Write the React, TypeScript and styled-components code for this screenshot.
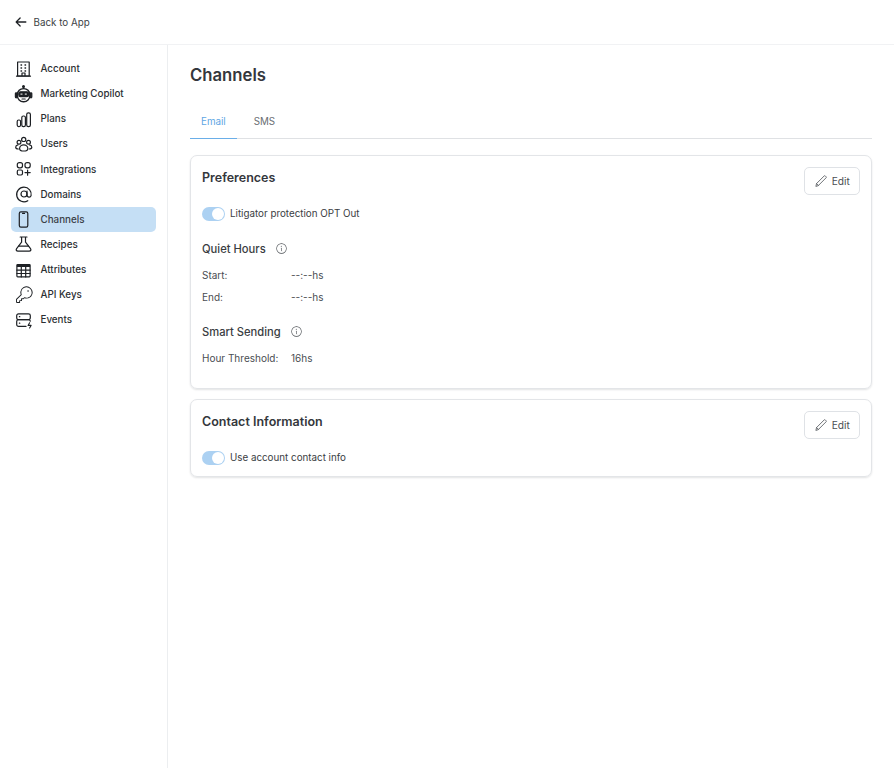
import React from 'react';
import styled, { createGlobalStyle } from 'styled-components';
import { PiArrowLeftBold, PiKeyLight, PiInfoLight } from 'react-icons/pi';

const GlobalStyle = createGlobalStyle`
  html, body {
    margin: 0;
    padding: 0;
    background: #fff;
    font-family: Inter, "Liberation Sans", sans-serif;
    color: #2f3237;
  }
  * { box-sizing: border-box; }
`;

const Page = styled.div`
  width: 894px;
  height: 768px;
  display: flex;
  flex-direction: column;
  overflow: hidden;
`;

const TopBar = styled.header`
  height: 45px;
  flex: none;
  display: flex;
  align-items: center;
  gap: 5.5px;
  padding: 0 0 0 14px;
  border-bottom: 1px solid #f1f2f4;
  font-size: 9.8px;
  color: #3c3f44;
  svg { font-size: 14px; color: #1f2226; }
`;

const Body = styled.div`
  flex: 1;
  display: flex;
  min-height: 0;
`;

const Sidebar = styled.nav`
  width: 168px;
  flex: none;
  border-right: 1px solid #eceef0;
  padding: 11px 11px 0;
  display: flex;
  flex-direction: column;
  gap: 0.15px;
`;

const NavItem = styled.div<{ $active?: boolean }>`
  width: 145px;
  height: 25px;
  display: flex;
  align-items: center;
  gap: 6.5px;
  padding-left: 3px;
  border-radius: 5px;
  font-size: 9.8px;
  font-weight: 500;
  color: ${p => (p.$active ? '#3a4046' : '#2c2f33')};
  background: ${p => (p.$active ? '#c5dff5' : 'transparent')};
  svg { width: 20px; height: 20px; flex: none; color: #1d2024; }
`;

const Main = styled.main`
  flex: 1;
  padding: 19px 22px 0;
  min-width: 0;
`;

const Title = styled.h1`
  margin: 0;
  font-size: 16.7px;
  line-height: 22px;
  font-weight: 600;
  color: #34373c;
`;

const Tabs = styled.div`
  margin-top: 18px;
  height: 35px;
  display: flex;
  border-bottom: 1px solid #dfe1e4;
`;

const Tab = styled.div<{ $active?: boolean }>`
  height: 35px;
  padding: 0 11px;
  margin-right: 6px;
  display: flex;
  align-items: center;
  font-size: 9.8px;
  color: ${p => (p.$active ? '#5ea6e4' : '#6a6e73')};
  border-bottom: ${p => (p.$active ? '1.5px solid #6aaee8' : 'none')};
`;

const Card = styled.section`
  margin-top: 10.5px;
  padding: 11px;
  border: 1px solid #e3e5e8;
  border-radius: 7px;
  box-shadow: 0 1px 2px rgba(20, 24, 30, 0.12);
  &:first-of-type { margin-top: 16px; }
`;

const CardHeader = styled.div`
  display: flex;
  justify-content: space-between;
  align-items: flex-start;
  height: 28px;
`;

const CardTitle = styled.h2`
  margin: 1px 0 0;
  font-size: 12.5px;
  line-height: 20px;
  font-weight: 600;
  color: #34373c;
`;

const EditButton = styled.button`
  width: 56.5px;
  height: 28px;
  display: flex;
  align-items: center;
  justify-content: center;
  gap: 4px;
  background: #fff;
  border: 1px solid #dfe2e6;
  border-radius: 5px;
  font-family: inherit;
  font-size: 10.2px;
  color: #4a4e53;
  padding: 0;
  svg { width: 14px; height: 14px; color: #55595e; }
`;

const ToggleRow = styled.div`
  margin-top: 11.5px;
  display: flex;
  align-items: center;
  gap: 5.5px;
  height: 14px;
  font-size: 9.8px;
  color: #3a3d42;
`;

const Toggle = styled.span`
  position: relative;
  width: 22.5px;
  height: 14px;
  border-radius: 7px;
  background: #acd1f2;
  &::after {
    content: '';
    position: absolute;
    right: 1px;
    top: 1px;
    width: 12px;
    height: 12px;
    border-radius: 50%;
    background: #fff;
  }
`;

const SectionTitle = styled.h3`
  margin: 19px 0 0;
  height: 18px;
  display: flex;
  align-items: center;
  gap: 9px;
  font-size: 11.2px;
  font-weight: 500;
  color: #3a3d42;
  svg { font-size: 13px; color: #4a4e53; }
`;

const Detail = styled.div`
  margin-top: 10px;
  display: grid;
  grid-template-columns: 89px 1fr;
  row-gap: 8px;
  font-size: 10px;
  line-height: 14px;
  color: #4a4d52;
`;

const Spacer = styled.div`
  height: 12px;
`;

const Stroke = styled.svg.attrs({
  viewBox: '0 0 20 20',
  fill: 'none',
  stroke: 'currentColor',
  strokeLinecap: 'round',
  strokeLinejoin: 'round',
  strokeWidth: 1.2,
})``;

const AccountIcon = () => (
  <Stroke>
    <rect x="3.6" y="3" width="11.6" height="14" />
    <path d="M2.5 17.2h14M8 17v-3h3v3" />
    <path d="M7 6h.6M11 6h.6M7 9h.6M11 9h.6M7 12h.6M11 12h.6" strokeWidth="1.3" />
  </Stroke>
);

const RobotIcon = () => (
  <Stroke>
    <circle cx="9.5" cy="2.6" r="0.9" fill="currentColor" />
    <path d="M9.5 3v1.6" />
    <rect x="3.4" y="4.6" width="12.4" height="13.2" rx="6" strokeWidth="1.4" />
    <rect x="4.8" y="7.8" width="9.8" height="4.8" rx="1.6" fill="currentColor" />
    <path d="M6.9 10.1h1.2M11.2 10.1h1.2" stroke="#fff" strokeWidth="1" />
    <path d="M8 15h3.2" />
    <rect x="1.4" y="8.8" width="1.6" height="5" rx="0.8" fill="currentColor" />
    <rect x="16.2" y="8.8" width="1.6" height="5" rx="0.8" fill="currentColor" />
  </Stroke>
);

const PlansIcon = () => (
  <Stroke>
    <rect x="3.2" y="11" width="3.4" height="6.6" rx="1.5" />
    <rect x="7.8" y="7" width="3.6" height="10.6" rx="1.6" />
    <rect x="12.7" y="3.8" width="3.7" height="13.8" rx="1.7" />
  </Stroke>
);

const UsersIcon = () => (
  <Stroke>
    <circle cx="9.7" cy="5.4" r="2.1" />
    <circle cx="5" cy="8.2" r="1.9" />
    <circle cx="14.5" cy="8.2" r="1.9" />
    <path d="M5.6 14.4c0-2 1.9-3.6 4.1-3.6s4.1 1.6 4.1 3.6c0 1.5-1.5 2.6-4.1 2.6s-4.1-1.1-4.1-2.6z" />
    <path d="M4 10.9c-1.5.3-2.3 1.3-2.3 2.3 0 1 1 1.7 2.6 1.8M15.5 10.9c1.5.3 2.3 1.3 2.3 2.3 0 1-1 1.7-2.6 1.8" />
  </Stroke>
);

const IntegrationsIcon = () => (
  <Stroke strokeWidth="1.3">
    <rect x="3.3" y="3.6" width="5.2" height="5.2" rx="2" />
    <rect x="11" y="3.6" width="5.2" height="5.2" rx="2" />
    <rect x="3.3" y="11" width="5.2" height="5" rx="1.4" />
    <path d="M13.6 11v5.2M11 13.6h5.2" />
  </Stroke>
);

const DomainsIcon = () => (
  <Stroke strokeWidth="1.3">
    <circle cx="10" cy="10" r="3" />
    <path d="M13 7v4.1a2.1 2.1 0 0 0 4.1.5c.9-4.3-2.5-8.4-7.1-8.4a7.3 7.3 0 1 0 3.8 13.5" />
  </Stroke>
);

const ChannelsIcon = () => (
  <Stroke>
    <rect x="5.3" y="2.8" width="8.5" height="15.4" rx="1.6" />
    <path d="M8.6 4.4h1.9" />
  </Stroke>
);

const RecipesIcon = () => (
  <Stroke>
    <path d="M6.2 3h6.8M7.6 3v5.2l-5 6.4c-.9 1.3-.2 2.6 1.3 2.6h11.3c1.5 0 2.2-1.3 1.3-2.6l-5-6.4V3" />
    <path d="M4.6 12.2h9.9" />
  </Stroke>
);

const AttributesIcon = () => (
  <Stroke strokeWidth="1.1">
    <rect x="2.9" y="4.5" width="13.2" height="12.4" rx="0.8" />
    <path d="M2.9 5.8h13.2" strokeWidth="2.4" strokeLinecap="butt" />
    <path d="M2.9 10.2h13.2M2.9 13.5h13.2M7.3 7v9.9M11.7 7v9.9" />
  </Stroke>
);

const EventsIcon = () => (
  <Stroke strokeWidth="1.4">
    <path d="M4.5 3.8h10a1.8 1.8 0 0 1 1.8 1.8v2.2a1.8 1.8 0 0 1-1.8 1.8h-10a1.8 1.8 0 0 1-1.8-1.8V5.6a1.8 1.8 0 0 1 1.8-1.8z" />
    <path d="M12 16.4H4.5a1.8 1.8 0 0 1-1.8-1.8v-3.2a1.8 1.8 0 0 1 1.8-1.8h10a1.8 1.8 0 0 1 1.8 1.5" />
    <path d="M5.4 6.7h.4M5.4 13.2h.4" />
    <path d="M15.6 12.8l-1.5 2.6h3l-1.5 2.6" strokeWidth="1.1" />
  </Stroke>
);

const PencilIcon = () => (
  <Stroke strokeWidth="1.1">
    <path d="M2.8 17.2l.9-3.6L14.6 2.7a1 1 0 0 1 1.4 0l1.3 1.3a1 1 0 0 1 0 1.4L6.4 16.3z" />
    <path d="M3.7 13.6l2.7 2.7" />
  </Stroke>
);

const navItems = [
  { label: 'Account', icon: <AccountIcon /> },
  { label: 'Marketing Copilot', icon: <RobotIcon /> },
  { label: 'Plans', icon: <PlansIcon /> },
  { label: 'Users', icon: <UsersIcon /> },
  { label: 'Integrations', icon: <IntegrationsIcon /> },
  { label: 'Domains', icon: <DomainsIcon /> },
  { label: 'Channels', icon: <ChannelsIcon />, active: true },
  { label: 'Recipes', icon: <RecipesIcon /> },
  { label: 'Attributes', icon: <AttributesIcon /> },
  { label: 'API Keys', icon: <PiKeyLight /> },
  { label: 'Events', icon: <EventsIcon /> },
];

const Edit = () => (
  <EditButton>
    <PencilIcon />
    Edit
  </EditButton>
);

export default function App() {
  return (
    <Page>
      <GlobalStyle />
      <TopBar>
        <PiArrowLeftBold />
        Back to App
      </TopBar>
      <Body>
        <Sidebar>
          {navItems.map(item => (
            <NavItem key={item.label} $active={item.active}>
              {item.icon}
              {item.label}
            </NavItem>
          ))}
        </Sidebar>
        <Main>
          <Title>Channels</Title>
          <Tabs>
            <Tab $active>Email</Tab>
            <Tab>SMS</Tab>
          </Tabs>
          <Card>
            <CardHeader>
              <CardTitle>Preferences</CardTitle>
              <Edit />
            </CardHeader>
            <ToggleRow>
              <Toggle />
              Litigator protection OPT Out
            </ToggleRow>
            <SectionTitle>
              Quiet Hours <PiInfoLight />
            </SectionTitle>
            <Detail>
              <span>Start:</span>
              <span>--:--hs</span>
              <span>End:</span>
              <span>--:--hs</span>
            </Detail>
            <SectionTitle>
              Smart Sending <PiInfoLight />
            </SectionTitle>
            <Detail>
              <span>Hour Threshold:</span>
              <span>16hs</span>
            </Detail>
            <Spacer />
          </Card>
          <Card>
            <CardHeader>
              <CardTitle>Contact Information</CardTitle>
              <Edit />
            </CardHeader>
            <ToggleRow>
              <Toggle />
              Use account contact info
            </ToggleRow>
          </Card>
        </Main>
      </Body>
    </Page>
  );
}
